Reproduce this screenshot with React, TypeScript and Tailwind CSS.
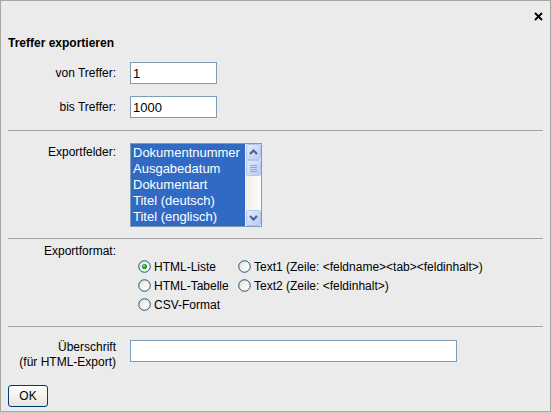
import React from 'react';

const felder = ['Dokumentnummer', 'Ausgabedatum', 'Dokumentart', 'Titel (deutsch)', 'Titel (englisch)'];

function Radio({ checked = false, label }: { checked?: boolean; label: string }) {
  return (
    <label className="flex h-[19px] items-center gap-[3px] whitespace-nowrap">
      <svg width="13" height="13" viewBox="0 0 13 13" className="shrink-0">
        <defs>
          <linearGradient id="radioFill" x1="0" y1="0" x2="1" y2="1">
            <stop offset="0" stopColor="#dcdcd6" />
            <stop offset="0.5" stopColor="#f4f4f0" />
            <stop offset="1" stopColor="#ffffff" />
          </linearGradient>
        </defs>
        <circle cx="6.5" cy="6.5" r="5.75" fill="url(#radioFill)" stroke="#1c5180" strokeWidth="1" />
        {checked && (
          <>
            <circle cx="6.5" cy="6.5" r="2.6" fill="#21a121" />
            <circle cx="6" cy="6" r="1" fill="#8de28d" />
          </>
        )}
      </svg>
      <span>{label}</span>
    </label>
  );
}

function Chevron({ up }: { up?: boolean }) {
  return (
    <svg width="9" height="6" viewBox="0 0 9 6">
      <polyline
        points={up ? '1,5 4.5,1.5 8,5' : '1,1 4.5,4.5 8,1'}
        fill="none"
        stroke="#4d6185"
        strokeWidth="2"
      />
    </svg>
  );
}

function ScrollButton({ children }: { children?: React.ReactNode }) {
  return (
    <div className="flex h-[16px] w-[15px] items-center justify-center rounded-[2px] border border-[#b3c6f3] bg-linear-to-br from-[#e4ecfe] to-[#b7cbf7]">
      {children}
    </div>
  );
}

function Separator() {
  return <div className="h-px bg-[#a3a3a3]" />;
}

export default function App() {
  return (
    <div className="min-h-screen bg-[#d2d0c6]">
      <div className="relative h-[412px] w-[551px] border border-[#a8a8a0] bg-[#ebebeb] px-[7px] pt-[35px] font-['Liberation_Sans',Arial,sans-serif] text-[12px] leading-[14px] text-black">
        <button className="absolute right-[7px] top-[11px]">
          <svg width="9" height="9" viewBox="0 0 9 9">
            <path d="M1 1 L8 8 M8 1 L1 8" stroke="#000" strokeWidth="1.8" />
          </svg>
        </button>

        <h1 className="font-bold">Treffer exportieren</h1>

        <div className="mt-[12px] flex items-center gap-[14px]">
          <span className="w-[108px] text-right">von Treffer:</span>
          <input
            defaultValue="1"
            className="h-[22px] w-[87px] border border-[#7f9db9] bg-white px-[2px] text-[13px] outline-none"
          />
        </div>
        <div className="mt-[12px] flex items-center gap-[14px]">
          <span className="w-[108px] text-right">bis Treffer:</span>
          <input
            defaultValue="1000"
            className="h-[22px] w-[87px] border border-[#7f9db9] bg-white px-[2px] text-[13px] outline-none"
          />
        </div>

        <div className="mt-[12px]">
          <Separator />
        </div>

        <div className="mt-[12px] flex items-start gap-[14px]">
          <span className="mt-[2px] w-[108px] text-right">Exportfelder:</span>
          <div className="flex h-[84px] w-[132px] border border-[#7f9db9] bg-white">
            <ul className="flex-1 bg-[#316ac5] pt-[1px] text-[13px] leading-[16px] text-white">
              {felder.map((f) => (
                <li key={f} className="whitespace-nowrap pl-[2px]">
                  {f}
                </li>
              ))}
            </ul>
            <div className="flex w-[16px] flex-col items-center bg-linear-to-r from-[#f1efe6] to-[#fdfdfa] pl-px">
              <ScrollButton>
                <Chevron up />
              </ScrollButton>
              <div className="flex-1 self-stretch pl-0">
                <ScrollButton>
                  <div className="flex flex-col gap-px">
                    <div className="h-px w-[7px] bg-[#8aa2e0]" />
                    <div className="h-px w-[7px] bg-[#8aa2e0]" />
                    <div className="h-px w-[7px] bg-[#8aa2e0]" />
                    <div className="h-px w-[7px] bg-[#8aa2e0]" />
                  </div>
                </ScrollButton>
              </div>
              <ScrollButton>
                <Chevron />
              </ScrollButton>
            </div>
          </div>
        </div>

        <div className="mt-[11px]">
          <Separator />
        </div>

        <div className="mt-[5px] flex items-start gap-[14px]">
          <span className="w-[108px] text-right">Exportformat:</span>
          <div className="mt-[13px] ml-[8px] grid grid-cols-[100px_auto]">
            <Radio checked label="HTML-Liste" />
            <Radio label="Text1 (Zeile: <feldname><tab><feldinhalt>)" />
            <Radio label="HTML-Tabelle" />
            <Radio label="Text2 (Zeile: <feldinhalt>)" />
            <Radio label="CSV-Format" />
          </div>
        </div>

        <div className="mt-[12px]">
          <Separator />
        </div>

        <div className="mt-[13px] flex items-start gap-[14px]">
          <span className="w-[108px] text-right leading-[15px]">
            Überschrift
            <br />
            (für HTML-Export)
          </span>
          <input className="h-[22px] w-[327px] border border-[#7f9db9] bg-white px-[2px] text-[13px] outline-none" />
        </div>

        <button className="mt-[15px] h-[22px] w-[40px] rounded-[3px] border border-[#003c74] bg-linear-to-b from-[#ffffff] to-[#e6e4da] text-[12px]">
          OK
        </button>
      </div>
    </div>
  );
}
